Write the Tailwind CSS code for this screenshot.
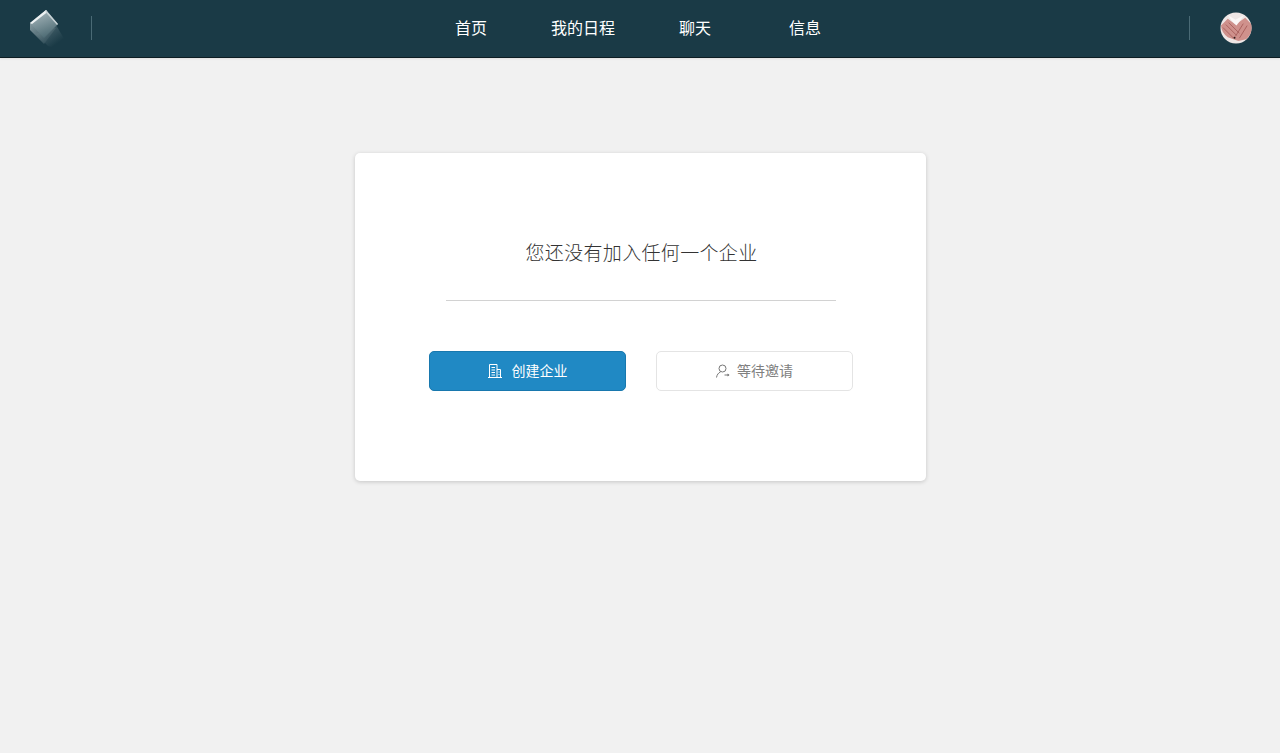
<!DOCTYPE html>
<html lang="zh-CN">
<head>
  <meta charset="UTF-8" />
  <meta name="viewport" content="width=device-width, initial-scale=1.0"/>
  <title>企业</title>
  <script src="https://cdn.jsdelivr.net/npm/@tailwindcss/browser@4"></script>
</head>
<body class="bg-[#f1f1f1] min-h-screen font-['Noto_Sans_CJK_SC','Liberation_Sans',sans-serif]">

  <!-- Header -->
  <header class="h-[58px] pb-[2px] bg-[#1a3a46] border-b border-[#0c1c22] shadow-[0_1px_2px_rgba(0,0,0,0.08)] flex items-center">
    <svg class="ml-[26px] w-[50px] h-[44px] mt-[8px] shrink-0" viewBox="0 0 50 44">
      <defs>
        <linearGradient id="tail" x1="0.15" y1="0.1" x2="0.85" y2="0.9">
          <stop offset="0" stop-color="#8fa3a9"/>
          <stop offset="0.8" stop-color="#1a3a46"/>
        </linearGradient>
        <linearGradient id="face" x1="0.3" y1="0" x2="0.7" y2="1">
          <stop offset="0" stop-color="#a9b8bd"/>
          <stop offset="1" stop-color="#47666f"/>
        </linearGradient>
        <linearGradient id="side" x1="0" y1="0" x2="1" y2="1">
          <stop offset="0" stop-color="#9aacb1"/>
          <stop offset="1" stop-color="#1a3a46"/>
        </linearGradient>
      </defs>
      <path d="M10 24 L22 36 L34 40 L40 32 L30 15 Z" fill="url(#tail)" opacity="0.45"/>
      <path d="M4 13 L4 20 L18 34 L30 18 Z" fill="url(#side)" opacity="0.85"/>
      <path d="M4 13 L20 0 L32 14 L18 28 Z" fill="url(#face)"/>
      <path d="M4 13 L20 0 L21.500 2 L6 14 Z" fill="#eef2f3"/>
      <path d="M20 0 L32 14 L31 15 L19.500 2 Z" fill="#c9d3d6"/>
    </svg>
    <div class="ml-[15px] w-px h-[24px] bg-[#4a6a75] shrink-0"></div>

    <nav class="ml-[363px] mb-[2px] flex items-center text-white text-[16px] leading-none">
      <a href="#">首页</a>
      <a href="#" class="ml-[64px]">我的日程</a>
      <a href="#" class="ml-[64px]">聊天</a>
      <a href="#" class="ml-[78px]">信息</a>
    </nav>

    <div class="ml-auto w-px h-[24px] bg-[#4a6a75] shrink-0"></div>
    <svg class="ml-[30px] mr-[28px] w-[32px] h-[32px] shrink-0" viewBox="0 0 33 33">
      <circle cx="16.500" cy="16.500" r="16" fill="#eee6e5"/>
      <path d="M1 14 L8 7 L16 13 L26 6 L32 12 A16 16 0 0 1 27 28 L19 30 L8 26 A16 16 0 0 1 1 14 Z" fill="#cf918c"/>
      <path d="M8 3 L16 8 L25 3 L17 14 L12 9 Z" fill="#fbf7f6"/>
      <path d="M6 13 L17 24 M9 11 L20 22 M3 16 L14 27 M24 12 L16 25 M28 14 L20 27" stroke="#a9615e" stroke-width="1" fill="none"/>
      <circle cx="15" cy="26.500" r="1" fill="#2c1a1a"/>
    </svg>
  </header>

  <!-- Card -->
  <main class="ml-[355px] mt-[95px] w-[571px] h-[328px] bg-white rounded-[5px] shadow-[0_1px_4px_rgba(0,0,0,0.18)] flex flex-col items-center">
    <h2 class="mt-[85px] ml-[2px] text-[19px] tracking-[0.33px] leading-[28px] font-light text-[#333]">您还没有加入任何一个企业</h2>
    <div class="mt-[34px] w-[390px] h-px bg-[#d2d2d2]"></div>

    <div class="mt-[50px] flex gap-[30px]">
      <button class="w-[197px] h-[40px] pl-px rounded-[5px] bg-[#2089c4] border border-[#1878ae] text-white text-[14px] flex items-center justify-center gap-[10px]">
        <svg class="w-[14px] h-[14px]" viewBox="0 0 14 14" fill="none" stroke="#fff" stroke-width="1">
          <path d="M0 13.500H14M1.500 13.500V0.500H9V13.500M9 5.500H12.500V13.500M3.500 3.500H7M3.500 6H7M3.500 8.500H7M3.500 11H7M10.500 8H11.500M10.500 10.500H11.500"/>
        </svg>
        <span class="mb-[2px]">创建企业</span>
      </button>
      <button class="w-[197px] h-[40px] pl-px rounded-[5px] bg-white border border-[#e4e4e4] text-[#808080] text-[14px] flex items-center justify-center gap-[7px]">
        <svg class="w-[14px] h-[14px]" viewBox="0 0 14 14" fill="none" stroke="#777" stroke-width="1">
          <circle cx="6.500" cy="4.500" r="3.500"/>
          <path d="M0.500 13.500C1 10.500 2.500 8.800 4.500 8M8.500 11H13"/>
          <path d="M11.500 9.500L13.500 11L11.500 12.500Z" fill="#777" stroke="none"/>
        </svg>
        <span class="mb-[2px]">等待邀请</span>
      </button>
    </div>
  </main>

</body>
</html>
